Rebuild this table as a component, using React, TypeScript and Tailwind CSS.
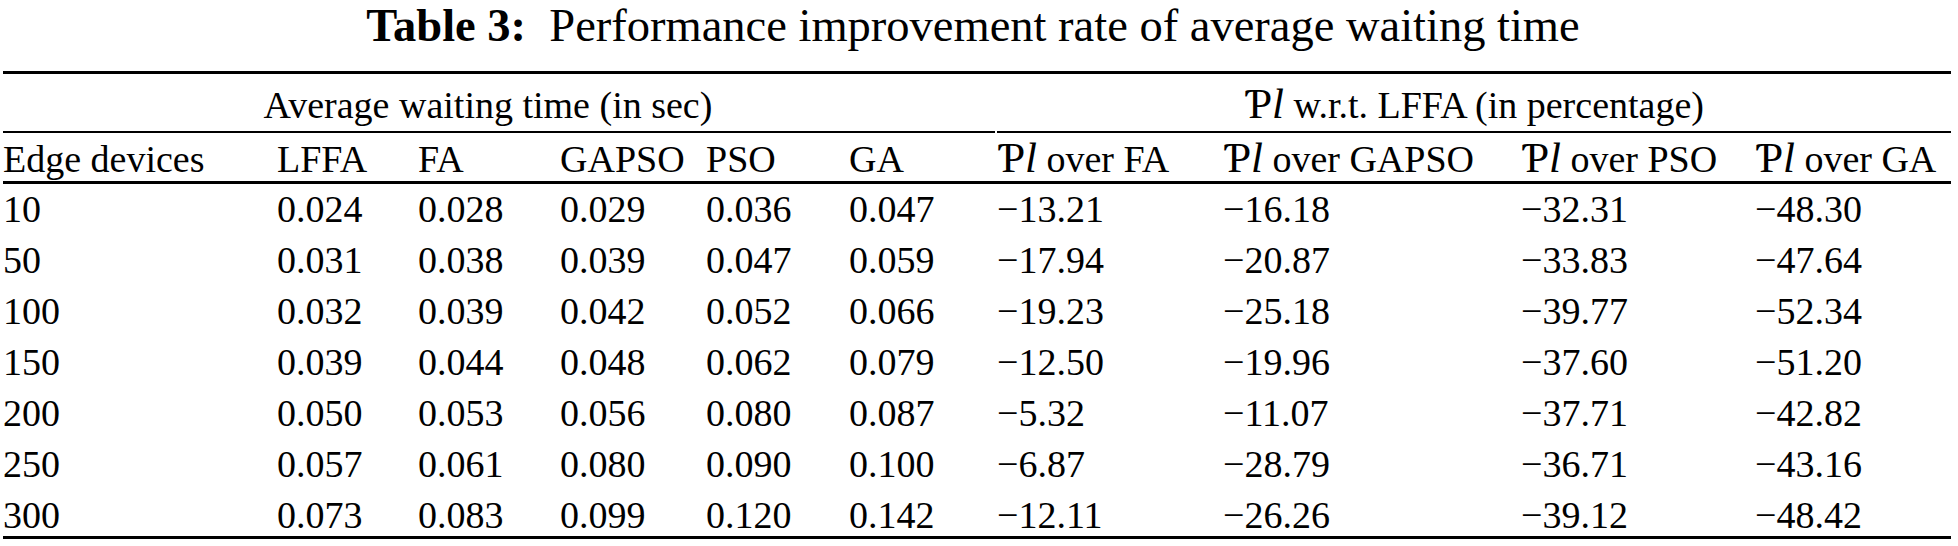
import React from 'react'

const cols = 'grid grid-cols-[274px_141px_142px_146px_143px_148px_226px_298px_234px_196px]'

const rows = [
  ['10',  '0.024', '0.028', '0.029', '0.036', '0.047', '−13.21', '−16.18', '−32.31', '−48.30'],
  ['50',  '0.031', '0.038', '0.039', '0.047', '0.059', '−17.94', '−20.87', '−33.83', '−47.64'],
  ['100', '0.032', '0.039', '0.042', '0.052', '0.066', '−19.23', '−25.18', '−39.77', '−52.34'],
  ['150', '0.039', '0.044', '0.048', '0.062', '0.079', '−12.50', '−19.96', '−37.60', '−51.20'],
  ['200', '0.050', '0.053', '0.056', '0.080', '0.087', '−5.32',  '−11.07', '−37.71', '−42.82'],
  ['250', '0.057', '0.061', '0.080', '0.090', '0.100', '−6.87',  '−28.79', '−36.71', '−43.16'],
  ['300', '0.073', '0.083', '0.099', '0.120', '0.142', '−12.11', '−26.26', '−39.12', '−48.42'],
]

// the "PI" symbol used in the paper
function PI() {
  return (
    <span className="text-[43px] leading-[0]">
      Ƥ<span className="italic">l</span>
    </span>
  )
}

export default function App() {
  return (
    <div className="w-[1958px] h-[546px] bg-white text-black pt-[3px] overflow-hidden font-['Liberation_Serif','DejaVu_Serif',serif]">

      {/* Caption */}
      <div className="text-center text-[46.5px] leading-[46px] whitespace-pre pr-[12px]">
        <span className="font-bold">Table 3:</span>{'  '}Performance improvement rate of average waiting time
      </div>

      {/* Table */}
      <div className="ml-[3px] w-[1948px] mt-[22px] text-[38px] leading-[42px]">
        <div className="h-[3px] bg-black" />

        {/* Group headers */}
        <div className="grid grid-cols-[994px_954px]">
          <div className="pt-[10px] pb-[5px] text-center pr-[24px]">Average waiting time (in sec)</div>
          <div className="pt-[10px] pb-[5px] text-center">
            <PI /> w.r.t. LFFA (in percentage)
          </div>
        </div>
        <div className="flex">
          <div className="w-[992px] h-[2px] bg-black" />
          <div className="w-[2px]" />
          <div className="flex-1 h-[2px] bg-black" />
        </div>

        {/* Column headers */}
        <div className={`${cols} pt-[5px] pb-[1px] whitespace-nowrap`}>
          <div>Edge devices</div>
          <div>LFFA</div>
          <div>FA</div>
          <div>GAPSO</div>
          <div>PSO</div>
          <div>GA</div>
          <div><PI /> over FA</div>
          <div><PI /> over GAPSO</div>
          <div><PI /> over PSO</div>
          <div><PI /> over GA</div>
        </div>
        <div className="h-[3px] bg-black" />

        {/* Body */}
        {rows.map((r, i) => (
          <div key={r[0]} className={`${cols} ${i === 0 ? 'pt-[4px]' : 'pt-[9px]'} whitespace-nowrap`}>
            {r.map((c, j) => (
              <div key={j}>{c}</div>
            ))}
          </div>
        ))}
        <div className="h-[3px] bg-black" />
      </div>
    </div>
  )
}
